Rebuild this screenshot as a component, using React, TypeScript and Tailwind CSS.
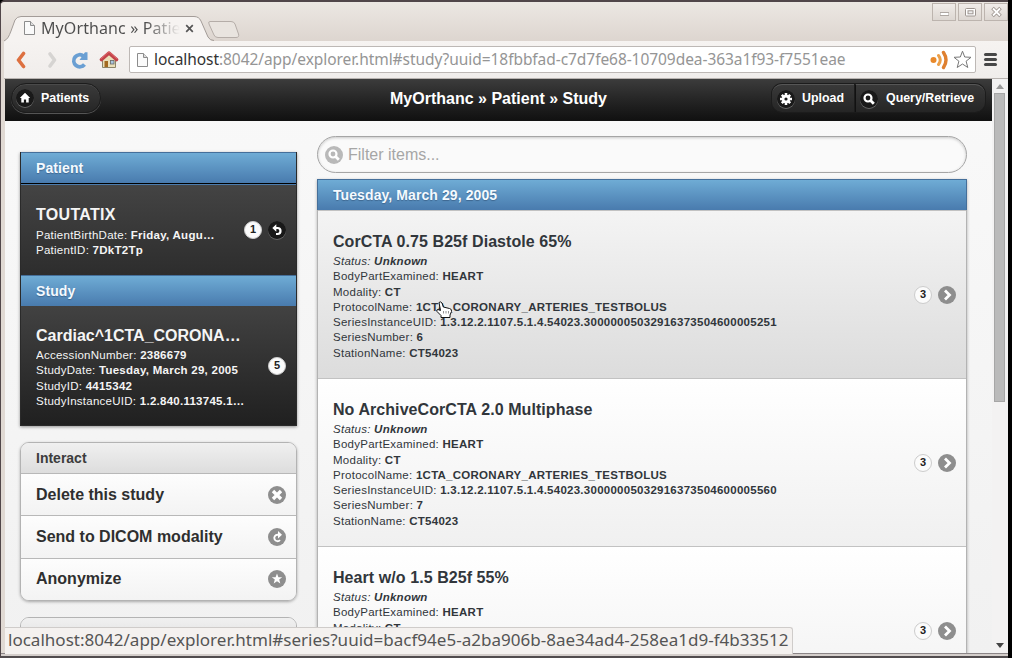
import type { ReactNode } from "react";

type Tag = { name: string; value: string; italic?: boolean };

const patientTags: Tag[] = [
  { name: "PatientBirthDate", value: "Friday, Augu…" },
  { name: "PatientID", value: "7DkT2Tp" },
];

const studyTags: Tag[] = [
  { name: "AccessionNumber", value: "2386679" },
  { name: "StudyDate", value: "Tuesday, March 29, 2005" },
  { name: "StudyID", value: "4415342" },
  { name: "StudyInstanceUID", value: "1.2.840.113745.1…" },
];

const series = [
  { title: "CorCTA 0.75 B25f Diastole 65%", uid: "1.3.12.2.1107.5.1.4.54023.30000005032916373504600005251", number: "6", hover: true },
  { title: "No ArchiveCorCTA 2.0 Multiphase", uid: "1.3.12.2.1107.5.1.4.54023.30000005032916373504600005560", number: "7", hover: false },
  { title: "Heart w/o 1.5 B25f 55%", uid: "1.3.12.2.1107.5.1.4.54023.30000005032916373504600005895", number: "8", hover: false },
];

export default function App() {
  return (
    <div className="relative flex h-[658px] w-[1012px] flex-col overflow-hidden bg-black pr-1 font-['Liberation_Sans',sans-serif]">
      <div className="flex h-full flex-col overflow-hidden rounded-tl-[5px] border-t-2 border-l border-[#51474a] bg-[#e0d9d3]">
        <TitleBar />
        <Toolbar />
        <div className="ml-1 flex h-[574px] overflow-hidden bg-[#f4f4f4]">
          <Page />
          <Scrollbar />
        </div>
        <div className="h-[5px] border-t border-b-2 border-t-[#8b8587] border-b-[#514c4e] bg-[#d4cecb]" />
      </div>
      <StatusBubble />
      <Cursor />
    </div>
  );
}

function TitleBar() {
  return (
    <div className="relative flex h-[39px] shrink-0 items-end bg-linear-to-b from-[#ece8e3] to-[#ddd5cf]">
      <svg className="absolute left-0 top-[13px]" width="245" height="27" viewBox="0 0 245 27">
        <path d="M3 26 C7 24 8 21 10 16 L14 5 Q16 1.500 20 1.500 H193 Q198 1.500 200 6 L207 22 Q209 26 213 26.500 V27 H3Z" fill="#f6f3f1" />
        <path d="M3 26 C7 24 8 21 10 16 L14 5 Q16 1.500 20 1.500 H193 Q198 1.500 200 6 L207 22 Q209 25.500 213 25.500" fill="none" stroke="#a39c98" />
        <path d="M209 6.500 H230 Q233 6.500 234 9 L237.500 19 Q238.500 22.500 235 22.500 H217 Q214 22.500 213 20 L208 9 Q207 6.500 209 6.500Z" fill="#e9e4df" stroke="#b5ada8" />
      </svg>
      <div className="relative flex h-[27px] items-center pl-[23px] pt-px">
        <PageIcon />
        <span className="ml-1.5 w-[139px] overflow-hidden whitespace-nowrap bg-linear-to-r from-[#4c4c4c] from-75% to-transparent to-100% bg-clip-text font-['Noto_Sans',sans-serif] text-[16px] leading-6 tracking-[0.1px] text-transparent">
          MyOrthanc » Patient
        </span>
        <svg className="ml-[5px] mt-px" width="9" height="9" viewBox="0 0 9 9">
          <path d="M1.200 1.200 L7.800 7.800 M7.800 1.200 L1.200 7.800" stroke="#555" strokeWidth="1.700" />
        </svg>
      </div>
      <div className="absolute right-0 top-[1px] flex gap-[2px]">
        <WindowButton>
          <path d="M7 11 H16" stroke="#9d9590" strokeWidth="3.500" />
          <path d="M7.500 11 H15.500" stroke="#fff" strokeWidth="1.800" />
        </WindowButton>
        <WindowButton>
          <rect x="6.500" y="5.500" width="10" height="7.500" rx="1" fill="#fff" stroke="#9d9590" />
          <rect x="9" y="7.800" width="5" height="3" fill="#eee" stroke="#9d9590" />
        </WindowButton>
        <WindowButton>
          <path d="M7.500 5 L15.500 13 M15.500 5 L7.500 13" stroke="#9d9590" strokeWidth="3.600" />
          <path d="M8 5.500 L15 12.500 M15 5.500 L8 12.500" stroke="#fff" strokeWidth="1.800" />
        </WindowButton>
      </div>
    </div>
  );
}

function WindowButton({ children }: { children: ReactNode }) {
  return (
    <div className="h-[18px] w-6 border border-[#bcb4ae] bg-linear-to-b from-[#f0ece9] to-[#ddd7d2]">
      <svg width="22" height="16" viewBox="0 1 22 16">{children}</svg>
    </div>
  );
}

function PageIcon() {
  return (
    <svg className="shrink-0" width="11" height="14" viewBox="0 0 11 14">
      <path d="M.5 .5 H6.500 L10.500 4.500 V13.500 H.5Z" fill="#fafafa" stroke="#8c8c8c" />
      <path d="M6.500 .5 V4.500 H10.500" fill="#ddd" stroke="#8c8c8c" />
    </svg>
  );
}

function Toolbar() {
  return (
    <div className="ml-[3px] flex h-[38px] shrink-0 items-center border-b border-[#b8b3b0] bg-linear-to-b from-[#f6f3f1] to-[#f0edeb]">
      <svg className="ml-[11px]" width="12" height="18" viewBox="0 0 12 18">
        <path d="M8.500 2.500 L3.500 9 L8.500 15.500" fill="none" stroke="#dd7040" strokeWidth="3.600" strokeLinecap="round" strokeLinejoin="round" />
      </svg>
      <svg className="ml-5" width="12" height="18" viewBox="0 0 12 18">
        <path d="M3 3 L7.500 9 L3 15" fill="none" stroke="#d6d4d2" strokeWidth="3.600" strokeLinecap="round" strokeLinejoin="round" />
      </svg>
      <svg className="ml-3" width="18" height="18" viewBox="0 0 18 18">
        <path d="M13.500 13.500 A6 6 0 1 1 12.500 5" fill="none" stroke="#6a9fd3" strokeWidth="3.800" />
        <path d="M8.500 9 H16.500 V1.200 H14Z" fill="#6a9fd3" />
      </svg>
      <svg className="ml-2.5" width="20" height="19" viewBox="0 0 20 19">
        <path d="M3.500 9 L10 4 L16.500 9 V17.500 H3.500Z" fill="#e9dfb9" stroke="#8c8468" />
        <rect x="5.500" y="11" width="3.500" height="6" fill="#a3691f" />
        <rect x="11.500" y="10.500" width="3.500" height="3.500" fill="#a8c5df" stroke="#666" strokeWidth=".8" />
        <path d="M2.500 9.500 L10 3 L17.500 9.500" fill="none" stroke="#c2434a" strokeWidth="3.600" strokeLinecap="round" strokeLinejoin="round" />
        <path d="M2 8.800 L10 1.800 L18 8.800" fill="none" stroke="#e0686a" strokeWidth="1" />
      </svg>
      <div className="ml-2.5 flex h-[27px] w-[847px] items-center rounded-[2px] border border-[#bdb8b5] bg-white pl-[7px]">
        <PageIcon />
        <span className="ml-1.5 whitespace-nowrap pb-0.5 font-['Noto_Sans',sans-serif] text-[15.500px] leading-6 tracking-[-0.06px] text-[#959595]">
          <span className="text-[#333]">localhost</span>:8042/app/explorer.html#study?uuid=18fbbfad-c7d7fe68-10709dea-363a1f93-f7551eae
        </span>
        <svg className="ml-auto" width="19" height="20" viewBox="0 0 19 20">
          <circle cx="3.500" cy="10" r="3" fill="#e8892b" />
          <path d="M8.500 5.500 Q12 10 8.500 14.500" fill="none" stroke="#eca04a" strokeWidth="3" strokeLinecap="round" />
          <path d="M13.500 2.500 Q18.500 10 13.500 17.500" fill="none" stroke="#df8030" strokeWidth="3.400" strokeLinecap="round" />
        </svg>
        <svg className="ml-1 mr-[3px]" width="19" height="19" viewBox="0 0 19 19">
          <path d="M9.500 1.200 L11.700 7 L18 7.300 L13.100 11.200 L14.800 17.500 L9.500 14 L4.200 17.500 L5.900 11.200 L1 7.300 L7.300 7Z" fill="#fff" stroke="#777" strokeLinejoin="round" />
        </svg>
      </div>
      <div className="ml-2 flex flex-col gap-[2px]">
        <div className="h-[3px] w-[13px] rounded-full bg-[#474747]" />
        <div className="h-[3px] w-[13px] rounded-full bg-[#474747]" />
        <div className="h-[3px] w-[13px] rounded-full bg-[#474747]" />
      </div>
    </div>
  );
}

function Page() {
  return (
    <div className="flex w-[987px] shrink-0 flex-col bg-linear-to-b from-[#f9f9f9] to-[#f1f1f1]">
      <div className="flex h-[42px] shrink-0 items-start justify-between border-b border-[#111] bg-linear-to-b from-[#3c3c3c] to-[#111] px-1.5 font-bold text-white">
        <div className="mt-1 flex w-[376px]">
          <div className="flex h-[30px] w-[90px] items-center rounded-full border border-[#1c1c1c] bg-linear-to-b from-[#3b3b3b] to-[#262626] pl-1 shadow-[0_1px_0_#555,inset_0_1px_0_#4a4a4a]">
            <IconDisc dark><HomeGlyph /></IconDisc>
            <span className="ml-[7px] text-[12.400px]">Patients</span>
          </div>
        </div>
        <h1 className="pt-[9px] text-[16px] leading-[22px]">MyOrthanc » Patient » Study</h1>
        <div className="mt-[5px] flex h-[28px] w-[376px] justify-end text-[12.400px]">
          <div className="flex w-[83px] items-center rounded-l-[10px] border-t border-[#565656] bg-linear-to-b from-[#393939] to-[#252525] pl-[5px] shadow-[0_0_0_1px_#1c1c1c]">
            <IconDisc dark><GearGlyph /></IconDisc>
            <span className="ml-[7px]">Upload</span>
          </div>
          <div className="mr-px flex w-[130px] items-center rounded-r-[10px] border-t border-l border-t-[#565656] border-l-[#111] bg-linear-to-b from-[#393939] to-[#252525] pl-1 shadow-[0_0_0_1px_#1c1c1c]">
            <IconDisc dark><SearchGlyph color="#fff" /></IconDisc>
            <span className="ml-2">Query/Retrieve</span>
          </div>
        </div>
      </div>
      <div className="flex items-start gap-5 pl-[15px]">
        <Sidebar />
        <SeriesList />
      </div>
    </div>
  );
}

function Divider({ children }: { children: ReactNode }) {
  return (
    <div className="flex h-[31px] items-center border-t border-[#456f9a] bg-linear-to-b from-[#6facd5] to-[#497bae] pl-[15px] text-[14px] font-bold tracking-[0.09px] text-[#f4faff] [text-shadow:0_1px_1px_#3e6790]">
      {children}
    </div>
  );
}

function Sidebar() {
  return (
    <div className="flex w-[277px] shrink-0 flex-col pt-[31px]">
      <div className="border border-[#2a2a2a] border-t-0 shadow-[0_1px_3px_rgba(0,0,0,0.4)]">
        <Divider>Patient</Divider>
        <div className="flex h-[92px] items-center border-t border-black bg-linear-to-b from-[#444] to-[#2d2d2d] pl-[15px] pr-2.5 text-[#f5f5f5] shadow-[inset_0_1px_0_#4b7cae]">
          <div className="w-[184px] pt-1">
            <h3 className="mb-[3px] text-[16px] font-bold leading-5 tracking-[0.3px]">TOUTATIX</h3>
            <TagLines tags={patientTags} />
          </div>
          <div className="ml-auto flex items-center gap-1.5">
            <Count>1</Count>
            <IconDisc dark><BackGlyph /></IconDisc>
          </div>
        </div>
        <Divider>Study</Divider>
        <div className="flex h-[119px] items-center bg-linear-to-b from-[#424242] to-[#202020] pl-[15px] pr-2.5 text-[#f5f5f5]">
          <div className="w-[214px] pt-1">
            <h3 className="mb-[2px] text-[16px] font-bold leading-5">Cardiac^1CTA_CORONA…</h3>
            <TagLines tags={studyTags} />
          </div>
          <div className="ml-auto">
            <Count>5</Count>
          </div>
        </div>
      </div>
      <div className="mt-4 overflow-hidden rounded-[9px] border border-[#b3b3b3] text-[#2f2f2f] shadow-[0_1px_3px_rgba(0,0,0,0.3)]">
        <div className="flex h-[30px] items-center bg-linear-to-b from-[#f0f0f0] to-[#dddddd] pl-[15px] text-[14px] font-bold text-[#3c3c3c]">Interact</div>
        <Action label="Delete this study"><CrossGlyph /></Action>
        <Action label="Send to DICOM modality"><ForwardGlyph /></Action>
        <Action label="Anonymize"><StarGlyph /></Action>
      </div>
      <div className="mt-4 overflow-hidden rounded-t-[9px] border border-[#b3b3b3]">
        <div className="flex h-[31px] items-center bg-linear-to-b from-[#f0f0f0] to-[#dddddd] pl-[15px] text-[14px] font-bold text-[#3c3c3c]">Access</div>
      </div>
    </div>
  );
}

function Action({ label, children }: { label: string; children: ReactNode }) {
  return (
    <div className="flex h-[42.400px] items-center justify-between border-t border-[#b8b8b8] bg-linear-to-b from-[#fdfdfd] to-[#f3f3f3] pl-[15px] pr-2.5 text-[16px] font-bold">
      {label}
      <IconDisc>{children}</IconDisc>
    </div>
  );
}

function TagLines({ tags }: { tags: Tag[] }) {
  return (
    <div className="text-[11.500px] leading-[15.200px] tracking-[0.26px]">
      {tags.map((tag) => (
        <p key={tag.name} className={tag.italic ? "truncate italic" : "truncate"}>
          {tag.name}: <strong>{tag.value}</strong>
        </p>
      ))}
    </div>
  );
}

function SeriesList() {
  return (
    <div className="w-[650px] pt-[15px]">
      <div className="flex h-[37px] items-center rounded-full border border-[#a5a5a5] bg-[#fafafa] pl-[7px] shadow-[inset_0_1px_3px_rgba(0,0,0,0.2)]">
        <svg width="18" height="18" viewBox="0 0 18 18">
          <circle cx="9" cy="9" r="9" fill="#b9b9b9" />
          <SearchGlyph color="#fff" />
        </svg>
        <span className="ml-[5px] text-[16px] text-[#a6a6a6]">Filter items...</span>
      </div>
      <div className="mt-[6px] border-x border-[#b3b3b3] shadow-[0_1px_3px_rgba(0,0,0,0.3)]">
        <div className="-mx-px">
          <div className="border-x border-[#456f9a]">
            <Divider>Tuesday, March 29, 2005</Divider>
          </div>
        </div>
        {series.map((s) => (
          <div
            key={s.title}
            className={`flex h-[168px] items-center border-t border-[#c2c2c2] bg-linear-to-b pl-[15px] pr-2.5 text-[#31363b] ${s.hover ? "from-[#f4f4f4] to-[#dcdcdc]" : "from-white to-[#f0f0f0]"}`}
          >
            <div className="pt-1">
              <h3 className="mb-[2px] text-[16px] font-bold leading-5 tracking-[0.07px]">{s.title}</h3>
              <TagLines
                tags={[
                  { name: "Status", value: "Unknown", italic: true },
                  { name: "BodyPartExamined", value: "HEART" },
                  { name: "Modality", value: "CT" },
                  { name: "ProtocolName", value: "1CTA_CORONARY_ARTERIES_TESTBOLUS" },
                  { name: "SeriesInstanceUID", value: s.uid },
                  { name: "SeriesNumber", value: s.number },
                  { name: "StationName", value: "CT54023" },
                ]}
              />
            </div>
            <div className="ml-auto flex items-center gap-1.5">
              <Count>3</Count>
              <IconDisc><ArrowGlyph /></IconDisc>
            </div>
          </div>
        ))}
      </div>
    </div>
  );
}

function Count({ children }: { children: ReactNode }) {
  return (
    <span className="flex h-[18px] w-[18px] items-center justify-center rounded-full border border-[#ccc] bg-[#fbfbfb] text-[11px] font-bold text-[#222]">
      {children}
    </span>
  );
}

function IconDisc({ dark, children }: { dark?: boolean; children: ReactNode }) {
  return (
    <svg className={dark ? "shrink-0 rounded-full shadow-[0_1px_0_#666]" : "shrink-0"} width="18" height="18" viewBox="0 0 18 18">
      <circle cx="9" cy="9" r="9" fill={dark ? "#191919" : "#8e8e8e"} />
      {children}
    </svg>
  );
}

function HomeGlyph() {
  return <path d="M9 3.800 L3.800 9 H5.300 V13.500 H7.900 V10.500 H10.100 V13.500 H12.700 V9 H14.200Z" fill="#fff" />;
}

function GearGlyph() {
  return (
    <g>
      <path d="M9 3 V15 M3 9 H15 M4.800 4.800 L13.200 13.200 M13.200 4.800 L4.800 13.200" stroke="#fff" strokeWidth="2.600" />
      <circle cx="9" cy="9" r="4.200" fill="#fff" />
      <circle cx="9" cy="9" r="1.600" fill="#191919" />
    </g>
  );
}

function SearchGlyph({ color }: { color: string }) {
  return (
    <g fill="none" stroke={color}>
      <circle cx="8" cy="8" r="3.500" strokeWidth="2.200" />
      <path d="M10.300 10.300 L13.800 13.800" strokeWidth="2.800" />
    </g>
  );
}

function BackGlyph() {
  return (
    <g>
      <path d="M7 7 H9.500 A3 3 0 0 1 9.500 13 H8" fill="none" stroke="#fff" strokeWidth="2.200" />
      <path d="M4.300 7 L8.300 3.200 V10.800Z" fill="#fff" />
    </g>
  );
}

function CrossGlyph() {
  return <path d="M5 5 L13 13 M13 5 L5 13" stroke="#fff" strokeWidth="3.400" />;
}

function ForwardGlyph() {
  return (
    <g>
      <path d="M11 6.800 H9.500 A3.200 3.200 0 1 0 12 12" fill="none" stroke="#fff" strokeWidth="1.900" />
      <path d="M14 6.800 L10 3 V10.500Z" fill="#fff" />
    </g>
  );
}

function StarGlyph() {
  return <path d="M9 3.500 L10.400 7.200 L14.200 7.300 L11.200 9.600 L12.300 13.400 L9 11.200 L5.700 13.400 L6.800 9.600 L3.800 7.300 L7.600 7.200Z" fill="#fff" />;
}

function ArrowGlyph() {
  return <path d="M7 4.500 L11.500 9 L7 13.500" fill="none" stroke="#fff" strokeWidth="2.800" />;
}

function Scrollbar() {
  return (
    <div className="flex w-[16px] flex-col items-center bg-[#f3f2f2]">
      <svg className="mt-[5px]" width="8" height="5" viewBox="0 0 8 5">
        <path d="M0 5 L4 0 L8 5Z" fill="#999" />
      </svg>
      <div className="mr-px mt-1 h-[309px] w-[11px] border border-[#a6a6a6] bg-[#bababa]" />
      <svg className="mb-[5px] mt-auto" width="8" height="5" viewBox="0 0 8 5">
        <path d="M0 0 L4 5 L8 0Z" fill="#444" />
      </svg>
    </div>
  );
}

function StatusBubble() {
  return (
    <div className="absolute left-[5px] top-[627px] flex h-[27px] w-[788px] items-center whitespace-nowrap rounded-tr-[3px] border-t border-r border-[#cfccca] bg-[#f4f1ef] pb-[3px] pl-[3px] font-['Noto_Sans',sans-serif] text-[17.050px] text-[#555]">
      localhost:8042/app/explorer.html#series?uuid=bacf94e5-a2ba906b-8ae34ad4-258ea1d9-f4b33512
    </div>
  );
}

function Cursor() {
  return (
    <svg className="absolute left-[435px] top-[301px]" width="18" height="18" viewBox="0 0 18 18">
      <path d="M4 1.500 Q5.500 0 7 2 L8.300 6 L14.500 7.500 Q17 8 16.500 10.500 L15 14 V16.500 H6 V14.500 L2 10.500 Q1 8.500 3 8.500 L5.500 9.500Z" fill="#fff" stroke="#111" strokeLinejoin="round" />
      <path d="M8.500 10 V12.500 M11 10 V12.500 M13.500 10 V12.500" stroke="#777" strokeWidth=".8" />
    </svg>
  );
}
